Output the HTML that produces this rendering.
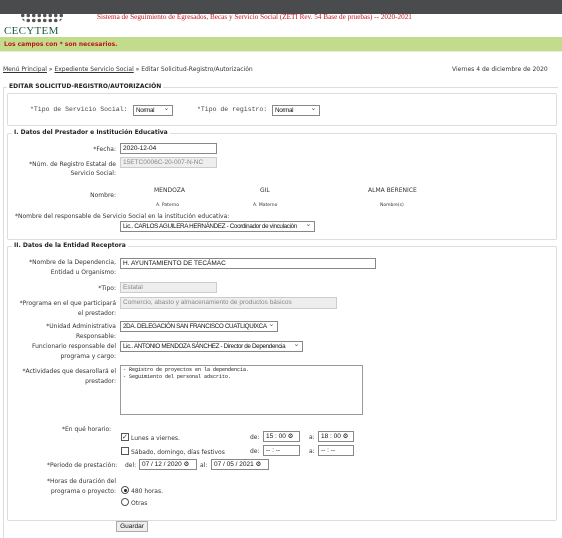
<!DOCTYPE html>
<html><head><meta charset="utf-8"><style>
*{margin:0;padding:0;box-sizing:border-box}
body{width:562px;height:538px;background:#fff;position:relative;overflow:hidden;font-family:"DejaVu Sans",Verdana,sans-serif;font-size:6px;color:#333}
.a{position:absolute;white-space:nowrap}
.r{text-align:right}
.in{position:absolute;border:1px solid #888;background:#fff;font-family:"Liberation Sans",sans-serif;font-size:6.5px;padding:1px 2px;color:#111;line-height:8px;white-space:nowrap;overflow:hidden}
.dis{background:#eee;border-color:#ccc;color:#888}
.sel{padding-right:11px;letter-spacing:-0.35px;font-size:6.3px}
.sel:after{content:"⌄";position:absolute;right:3px;top:-1px;color:#555;font-size:7px;background:#fff}
.box{position:absolute;border:1px solid #ddd;border-radius:2px}
.leg{position:absolute;background:#fff;font-weight:bold;font-size:6px;padding:0 2px;color:#222}
.mono{font-family:"Liberation Mono",monospace;font-size:6.5px}
.cb{position:absolute;width:8px;height:8px;border:1px solid #555;background:#fff}
.rd{position:absolute;width:8px;height:8px;border:1px solid #555;border-radius:50%;background:#fff}
</style></head><body>
<div class="a" style="left:0;top:0;width:562px;height:14px;background:#4a4b4d"></div>
<div class="a" style="left:20px;top:13px;width:44px;height:10px;background:radial-gradient(circle,#555 45%,transparent 50%) 0 0/5.5px 5px;border-radius:0 0 20px 20px"></div>
<div class="a" style="left:4px;top:25px;font-family:'Liberation Serif',serif;font-size:11px;color:#1f5a3a;letter-spacing:.3px">CECYTEM</div>
<div class="a" style="left:97px;top:13px;font-family:'Liberation Serif',serif;font-size:7.2px;color:#c0131b">Sistema de Seguimiento de Egresados, Becas y Servicio Social (ZETI Rev. 54 Base de pruebas) -- 2020-2021</div>
<div class="a" style="left:0;top:37px;width:562px;height:15px;background:#c2dc8c;border-bottom:1px solid #e8efd8"></div>
<div class="a" style="left:4px;top:41px;font-size:6px;font-weight:bold;color:#c0131b">Los campos con * son necesarios.</div>
<div class="a" style="left:3px;top:66px;font-size:6px"><u>Menú Principal</u> » <u>Expediente Servicio Social</u> » Editar Solicitud-Registro/Autorización</div>
<div class="a" style="left:452px;top:66px;font-size:6px">Viernes 4 de diciembre de 2020</div>
<div class="a" style="left:3px;top:87px;width:555px;height:451px;border-left:1px solid #ddd;border-top:1px solid #ddd"></div>
<div class="leg" style="left:7px;top:83px">EDITAR SOLICITUD-REGISTRO/AUTORIZACIÓN</div>
<div class="box" style="left:7px;top:93px;width:550px;height:33px"></div>
<div class="a mono" style="left:30px;top:106px;color:#444">*Tipo de Servicio Social:</div>
<div class="in sel" style="left:133px;top:105px;width:40px;height:11px">Normal</div>
<div class="a mono" style="left:197px;top:106px;color:#444">*Tipo de registro:</div>
<div class="in sel" style="left:272px;top:105px;width:48px;height:11px">Normal</div>

<div class="box" style="left:7px;top:133px;width:550px;height:107px"></div>
<div class="leg" style="left:12px;top:129px">I. Datos del Prestador e Institución Educativa</div>
<div class="a r" style="right:446px;top:146px">*Fecha:</div>
<div class="in" style="left:120px;top:143px;width:97px;height:11px">2020-12-04</div>
<div class="a r" style="right:446px;top:160px;line-height:9px">*Núm. de Registro Estatal de<br>Servicio Social:</div>
<div class="in dis" style="left:120px;top:157px;width:97px;height:11px">15ETC0006C-20-007-N-NC</div>
<div class="a r" style="right:446px;top:192px">Nombre:</div>
<div class="a" style="left:154px;top:187px">MENDOZA</div>
<div class="a" style="left:260px;top:187px">GIL</div>
<div class="a" style="left:368px;top:187px">ALMA BERENICE</div>
<div class="a" style="left:156px;top:203px;font-size:4.5px">A. Paterno</div>
<div class="a" style="left:253px;top:203px;font-size:4.5px">A. Materno</div>
<div class="a" style="left:380px;top:203px;font-size:4.5px">Nombre(s)</div>
<div class="a" style="left:15px;top:213px">*Nombre del responsable de Servicio Social en la institución educativa:</div>
<div class="in sel" style="left:120px;top:221px;width:195px;height:11px">Lic.. CARLOS AGUILERA HERNÁNDEZ - Coordinador de vinculación</div>

<div class="box" style="left:7px;top:246px;width:550px;height:275px"></div>
<div class="leg" style="left:12px;top:242px">II. Datos de la Entidad Receptora</div>
<div class="a r" style="right:446px;top:258px;line-height:10px">*Nombre de la Dependencia,<br>Entidad u Organismo:</div>
<div class="in" style="left:120px;top:258px;width:256px;height:11px">H. AYUNTAMIENTO DE TECÁMAC</div>
<div class="a r" style="right:446px;top:285px">*Tipo:</div>
<div class="in dis" style="left:120px;top:282px;width:97px;height:11px">Estatal</div>
<div class="a r" style="right:446px;top:299px;line-height:10px">*Programa en el que participará<br>el prestador:</div>
<div class="in dis" style="left:120px;top:297px;width:217px;height:12px">Comercio, abasto y almacenamiento de productos básicos</div>
<div class="a r" style="right:446px;top:322px;line-height:10px">*Unidad Administrativa<br>Responsable:</div>
<div class="in sel" style="left:120px;top:321px;width:158px;height:11px">2DA. DELEGACIÓN SAN FRANCISCO CUATLIQUIXCA</div>
<div class="a r" style="right:446px;top:342px;line-height:10px">Funcionario responsable del<br>programa y cargo:</div>
<div class="in sel" style="left:120px;top:341px;width:183px;height:11px">Lic.. ANTONIO MENDOZA SÁNCHEZ - Director de Dependencia</div>
<div class="a r" style="right:446px;top:367px;line-height:10px">*Actividades que desarollará el<br>prestador:</div>
<div class="in" style="left:120px;top:365px;width:243px;height:50px;font-family:'Liberation Mono',monospace;font-size:5px;line-height:7px;border-color:#999">- Registro de proyectos en la dependencia.<br>- Seguimiento del personal adscrito.</div>
<div class="a" style="left:62px;top:426px">*En qué horario:</div>
<div class="cb" style="left:121px;top:433px;font-size:7px;line-height:6px">✓</div>
<div class="a" style="left:131px;top:435px">Lunes a viernes.</div>
<div class="cb" style="left:121px;top:447px"></div>
<div class="a" style="left:131px;top:449px">Sábado, domingo, días festivos</div>
<div class="a" style="left:250px;top:434px">de:</div>
<div class="in" style="left:263px;top:431px;width:37px;height:11px">15 : 00 ⚙</div>
<div class="a" style="left:309px;top:434px">a:</div>
<div class="in" style="left:318px;top:431px;width:36px;height:11px">18 : 00 ⚙</div>
<div class="a" style="left:250px;top:448px">de:</div>
<div class="in" style="left:263px;top:445px;width:37px;height:11px">-- : --</div>
<div class="a" style="left:309px;top:448px">a:</div>
<div class="in" style="left:318px;top:445px;width:36px;height:11px">-- : --</div>
<div class="a" style="left:47px;top:462px">*Periodo de prestación:</div>
<div class="a" style="left:125px;top:462px">del:</div>
<div class="in" style="left:139px;top:459px;width:58px;height:11px">07 / 12 / 2020 ⚙</div>
<div class="a" style="left:200px;top:462px">al:</div>
<div class="in" style="left:211px;top:459px;width:58px;height:11px">07 / 05 / 2021 ⚙</div>
<div class="a r" style="right:446px;top:477px;line-height:10px">*Horas de duración del<br>programa o proyecto:</div>
<div class="rd" style="left:121px;top:486px"><div style="margin:1.5px;width:3px;height:3px;border-radius:50%;background:#222"></div></div>
<div class="a" style="left:131px;top:488px">480 horas.</div>
<div class="rd" style="left:121px;top:498px"></div>
<div class="a" style="left:131px;top:500px">Otras</div>
<div class="a" style="left:116px;top:521px;width:32px;height:11px;border:1px solid #aaa;background:#eee;font-family:'Liberation Sans',sans-serif;font-size:6.5px;text-align:center;line-height:9px;color:#111">Guardar</div>
</body></html>
